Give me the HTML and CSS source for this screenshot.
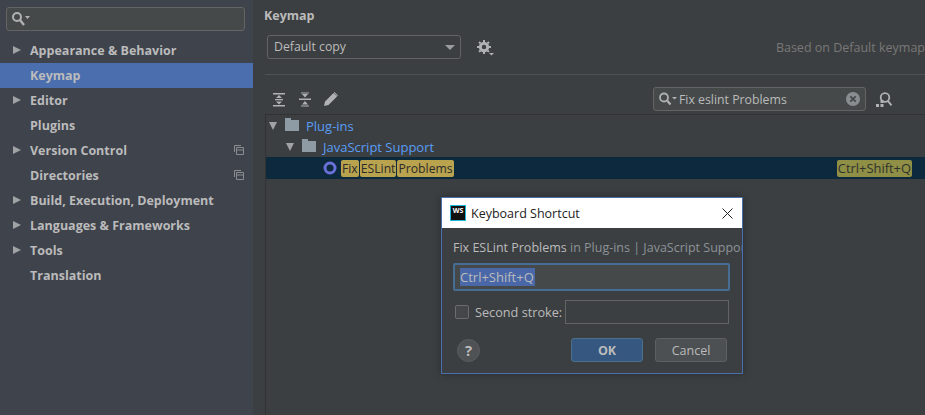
FILE: index.html
```html
<!DOCTYPE html>
<html lang="en">
<head>
  <meta charset="UTF-8" />
  <title>Keymap</title>
  <link rel="stylesheet" href="styles.css">
</head>
<body>
  <aside class="sidebar">
    <div class="side-search">
      <svg class="search-icon" width="19" height="16" viewBox="0 0 19 16"><circle cx="6" cy="6" r="4" fill="none" stroke="#afb1b3" stroke-width="2"/><path d="M9 9l4 5" stroke="#afb1b3" stroke-width="2.4"/><path d="M14 5h5l-2.5 3z" fill="#afb1b3"/></svg>
    </div>
    <ul class="nav">
      <li class="nav-item"><span class="arrow"></span>Appearance &amp; Behavior</li>
      <li class="nav-item selected">Keymap</li>
      <li class="nav-item"><span class="arrow"></span>Editor</li>
      <li class="nav-item">Plugins</li>
      <li class="nav-item"><span class="arrow"></span>Version Control
        <svg class="copy-icon" width="10" height="10" viewBox="0 0 10 10"><path d="M.5 7V.5H7M2.5 2.5h7v7h-7zM2.5 5h7" fill="none" stroke="#8a8d90"/></svg>
      </li>
      <li class="nav-item">Directories
        <svg class="copy-icon" width="10" height="10" viewBox="0 0 10 10"><path d="M.5 7V.5H7M2.5 2.5h7v7h-7zM2.5 5h7" fill="none" stroke="#8a8d90"/></svg>
      </li>
      <li class="nav-item"><span class="arrow"></span>Build, Execution, Deployment</li>
      <li class="nav-item"><span class="arrow"></span>Languages &amp; Frameworks</li>
      <li class="nav-item"><span class="arrow"></span>Tools</li>
      <li class="nav-item">Translation</li>
    </ul>
  </aside>

  <main class="panel">
    <h1 class="panel-title">Keymap</h1>
    <div class="scheme-row">
      <div class="combo">Default copy<span class="combo-arrow"></span></div>
      <svg class="gear" width="17" height="16" viewBox="0 0 17 16"><circle cx="7" cy="7" r="3.7" fill="none" stroke="#afb1b3" stroke-width="3"/><path d="M7 0v14M0 7h14M2 2l10 10M12 2L2 12" stroke="#afb1b3" stroke-width="2" stroke-dasharray="2 10"/><path d="M12 13h5l-2.500 2.500z" fill="#afb1b3"/></svg>
      <span class="based">Based on Default keymap</span>
    </div>

    <div class="toolbar">
      <svg class="tool" width="14" height="15" viewBox="0 0 14 15"><path d="M1 1h12v1.500H1zM1 13h12v1.500H1zM7 3l3 3H4zM7 12.500l3-3H4zM3 7h8v1.300H3z" fill="#afb1b3"/></svg>
      <svg class="tool" width="14" height="15" viewBox="0 0 14 15"><path d="M1 6.500h12V8H1zM7 5.500l3-3.500H4zM7 9l3 3.500H4z" fill="#afb1b3"/><path d="M3 .5h8v1H3zM3 13.500h8v1H3z" fill="#afb1b3"/></svg>
      <svg class="tool" width="14" height="14" viewBox="0 0 14 14"><path d="M0 14l1-4.500L9.500 1l3.500 3.500L4.500 13z M10.500 0l3.500 3.500-.7.700-3.500-3.500z" fill="#afb1b3"/></svg>
      <div class="filter">
        <svg width="20" height="14" viewBox="0 0 20 14"><circle cx="6" cy="5.500" r="4" fill="none" stroke="#afb1b3" stroke-width="1.800"/><path d="M9 8.500l3.500 4" stroke="#afb1b3" stroke-width="2.200"/><path d="M14 5h5l-2.500 2.500z" fill="#afb1b3"/></svg>
        <span class="filter-text">Fix eslint Problems</span>
        <span class="clear"><svg width="14" height="14" viewBox="0 0 14 14"><circle cx="7" cy="7" r="7" fill="#8a8d90"/><path d="M4.300 4.300l5.400 5.400M9.700 4.300l-5.400 5.400" stroke="#45484a" stroke-width="1.800"/></svg></span>
      </div>
      <svg class="find-shortcut" width="16" height="15" viewBox="0 0 16 15"><circle cx="9" cy="5.500" r="4.300" fill="none" stroke="#afb1b3" stroke-width="1.800"/><path d="M12 9l3.500 4.500" stroke="#afb1b3" stroke-width="2"/><path d="M0 12h3v3H0zM4.500 12h3v3h-3zM4.500 8h3v3h-3z" fill="#afb1b3"/></svg>
    </div>

    <div class="tree">
      <div class="tree-row depth-1">
        <span class="tree-arrow"></span><span class="folder"></span><span class="link">Plug-ins</span>
      </div>
      <div class="tree-row depth-2">
        <span class="tree-arrow"></span><span class="folder"></span><span class="link">JavaScript Support</span>
      </div>
      <div class="tree-row depth-3 current">
        <svg class="action-icon" width="14" height="14" viewBox="0 0 14 14"><circle cx="7" cy="7" r="5" fill="none" stroke="#6a70d8" stroke-width="3"/></svg>
        <span class="hit">Fix</span><span class="hit">ESLint</span><span class="hit">Problems</span>
        <span class="hit shortcut">Ctrl+Shift+Q</span>
      </div>
    </div>
  </main>

  <div class="dialog">
    <div class="dialog-title">
      <span class="ws-logo">WS</span>
      <span class="dialog-name">Keyboard Shortcut</span>
      <svg class="close" width="11" height="11" viewBox="0 0 11 11"><path d="M.5.5l10 10M10.500.5l-10 10" stroke="#222" stroke-width="1"/></svg>
    </div>
    <div class="dialog-body">
      <p class="action-path"><span class="action-name">Fix ESLint Problems</span> in Plug-ins | JavaScript Support</p>
      <div class="key-input"><span class="key-selected">Ctrl+Shift+Q</span></div>
      <div class="second-row">
        <span class="checkbox"></span>
        <span class="second-label">Second stroke:</span>
        <span class="second-input"></span>
      </div>
      <div class="dialog-buttons">
        <span class="help">?</span>
        <button class="btn btn-ok">OK</button>
        <button class="btn">Cancel</button>
      </div>
    </div>
  </div>
</body>
</html>
```

FILE: styles.css
```css
:root {
  --panel-color: #3c3f41;
  --side-color: #3f434c;
  --text-color: #bbbbbb;
  --line-color: #646464;
  --link-color: #589df6;
}

* {
  box-sizing: border-box;
}

html, body {
  height: 100%;
}

body {
  margin: 0;
  display: flex;
  height: 415px;
  overflow: hidden;
  background-color: var(--panel-color);
  color: var(--text-color);
  font-family: 'Open Sans', 'Noto Sans', sans-serif;
  font-size: 12.5px;
}

.sidebar {
  width: 253px;
  flex: none;
  padding-top: 7px;
  background-color: var(--side-color);
}

.side-search {
  display: flex;
  align-items: center;
  width: 239px;
  height: 24px;
  margin-left: 6px;
  padding-left: 4px;
  background-color: #45494a;
  border: 1px solid var(--line-color);
  border-radius: 3px;
}

.nav {
  list-style: none;
  margin: 7px 0 0;
  padding: 0;
}

.nav-item {
  display: flex;
  align-items: center;
  height: 25px;
  padding-left: 30px;
  position: relative;
  font-weight: 700;
}

.nav-item.selected {
  background-color: #4b6eaf;
}

.arrow {
  position: absolute;
  left: 13px;
  top: 8px;
  border-left: 8px solid #a0a2a5;
  border-top: 4.5px solid transparent;
  border-bottom: 4.5px solid transparent;
}

.copy-icon {
  position: absolute;
  left: 234px;
  top: 7px;
}

.panel {
  flex: 1;
  min-width: 0;
}

.panel-title {
  margin: 0;
  height: 28px;
  padding: 7px 0 0 11px;
  font-size: 12.5px;
  font-weight: 700;
}

.scheme-row {
  display: flex;
  align-items: flex-start;
  height: 47px;
  margin-left: 12px;
  padding: 7px 0 0 2px;
  border-bottom: 1px solid #4f5254;
}

.combo {
  position: relative;
  width: 194px;
  height: 24px;
  padding: 2px 0 0 6px;
  border: 1px solid var(--line-color);
  border-radius: 3px;
  font-size: 12.3px;
  white-space: nowrap;
}

.combo-arrow {
  position: absolute;
  right: 5px;
  top: 9px;
  border-top: 5px solid #9a9c9f;
  border-left: 5px solid transparent;
  border-right: 5px solid transparent;
}

.gear {
  margin: 5px 0 0 16px;
}

.based {
  margin: 4px 0 0 auto;
  color: #787878;
  white-space: nowrap;
}

.toolbar {
  display: flex;
  align-items: center;
  height: 39px;
  padding: 9px 0 0 19px;
  gap: 12px;
}

.filter {
  display: flex;
  align-items: center;
  width: 213px;
  height: 24px;
  margin-left: auto;
  padding-left: 4px;
  background-color: #45494a;
  border: 1px solid var(--line-color);
  border-radius: 3px;
}

.filter-text {
  margin-left: 1px;
  font-size: 12.3px;
}

.clear {
  display: flex;
  margin-left: auto;
  margin-right: 5px;
}

.find-shortcut {
  margin-right: 33px;
  margin-left: -2px;
}

.tree {
  margin-left: 12px;
  height: 301px;
  border-top: 1px solid #323232;
  border-left: 1px solid #323232;
}

.tree-row {
  display: flex;
  align-items: center;
  height: 21px;
  white-space: nowrap;
}

.depth-1 {
  padding-left: 3px;
}

.depth-2 {
  padding-left: 20px;
}

.depth-3 {
  padding-left: 57px;
  height: 22px;
}

.current {
  background-color: #0d293e;
}

.tree-arrow {
  width: 0;
  margin-right: 7px;
  border-top: 8px solid #a0a2a5;
  border-left: 4.5px solid transparent;
  border-right: 4.5px solid transparent;
}

.folder {
  position: relative;
  width: 14px;
  height: 11px;
  margin: 0 7px 0 1px;
  background-color: #8e9ba5;
}

.folder::before {
  content: "";
  position: absolute;
  left: 0;
  top: -2px;
  width: 6px;
  height: 2px;
  background-color: #8e9ba5;
}

.link {
  color: var(--link-color);
  font-size: 13px;
}

.action-icon {
  margin-right: 4px;
}

.hit {
  padding: 0 1px;
  margin-right: 1px;
  font-size: 12.2px;
  color: #2b2b2b;
  background-color: #b9a34e;
  border-radius: 2px;
  line-height: 17px;
}

.shortcut {
  margin-left: auto;
  margin-right: 13px;
  font-size: 12.9px;
  color: #30322e;
  background-color: #8f8f45;
}

.dialog {
  position: absolute;
  left: 441px;
  top: 197px;
  width: 302px;
  height: 177px;
  background-color: var(--panel-color);
  border: 1px solid #4b6eaf;
  box-shadow: 0 0 8px rgba(0, 0, 0, 0.3);
}

.dialog-title {
  display: flex;
  align-items: center;
  height: 30px;
  padding-left: 8px;
  background-color: #ffffff;
  color: #222222;
}

.ws-logo {
  display: flex;
  align-items: flex-start;
  justify-content: center;
  width: 16px;
  height: 16px;
  background-color: #111111;
  border: 1px solid #1fb6d8;
  color: #ffffff;
  font-size: 7px;
  font-weight: 700;
  line-height: 9px;
}

.dialog-name {
  margin-left: 5px;
}

.close {
  margin-left: auto;
  margin-right: 9px;
}

.dialog-body {
  padding: 0 12px 0 11px;
  overflow: hidden;
}

.action-path {
  margin: 11px -12px 0 0;
  color: #8c9297;
  white-space: nowrap;
  overflow: hidden;
  line-height: 18px;
}

.action-name {
  color: var(--text-color);
}

.key-input {
  display: flex;
  align-items: center;
  height: 28px;
  margin-top: 6px;
  padding-left: 5px;
  font-size: 13px;
  background-color: #45494a;
  border: 2px solid #466d94;
  border-radius: 2px;
}

.key-selected {
  padding: 0 1px 0 0;
  line-height: 18px;
  color: #bbbbbb;
  background-color: #4a68a8;
}

.second-row {
  display: flex;
  align-items: center;
  height: 24px;
  margin-top: 9px;
}

.checkbox {
  width: 14px;
  height: 14px;
  margin-left: 2px;
  border: 1px solid #6b6b6b;
  border-radius: 2px;
  background-color: #43474a;
}

.second-label {
  margin-left: 6px;
  white-space: nowrap;
  font-size: 12.7px;
}

.second-input {
  flex: 1;
  height: 24px;
  margin: 0 1px 0 3px;
  border: 1px solid var(--line-color);
}

.dialog-buttons {
  display: flex;
  align-items: center;
  margin-top: 14px;
  padding-right: 3px;
}

.help {
  display: flex;
  align-items: center;
  justify-content: center;
  width: 23px;
  height: 23px;
  margin-left: 4px;
  border-radius: 50%;
  background-color: #4e5254;
  border: 1px solid #5a5d5f;
  font-size: 15px;
  font-weight: 700;
}

.btn {
  width: 72px;
  height: 24px;
  padding: 0;
  margin-left: 12px;
  font: inherit;
  color: var(--text-color);
  background-color: #4c5052;
  border: 1px solid #5e6060;
  border-radius: 3px;
}

.btn-ok {
  margin-left: auto;
  font-weight: 700;
  background-color: #365880;
  border-color: #4c708c;
}
```
